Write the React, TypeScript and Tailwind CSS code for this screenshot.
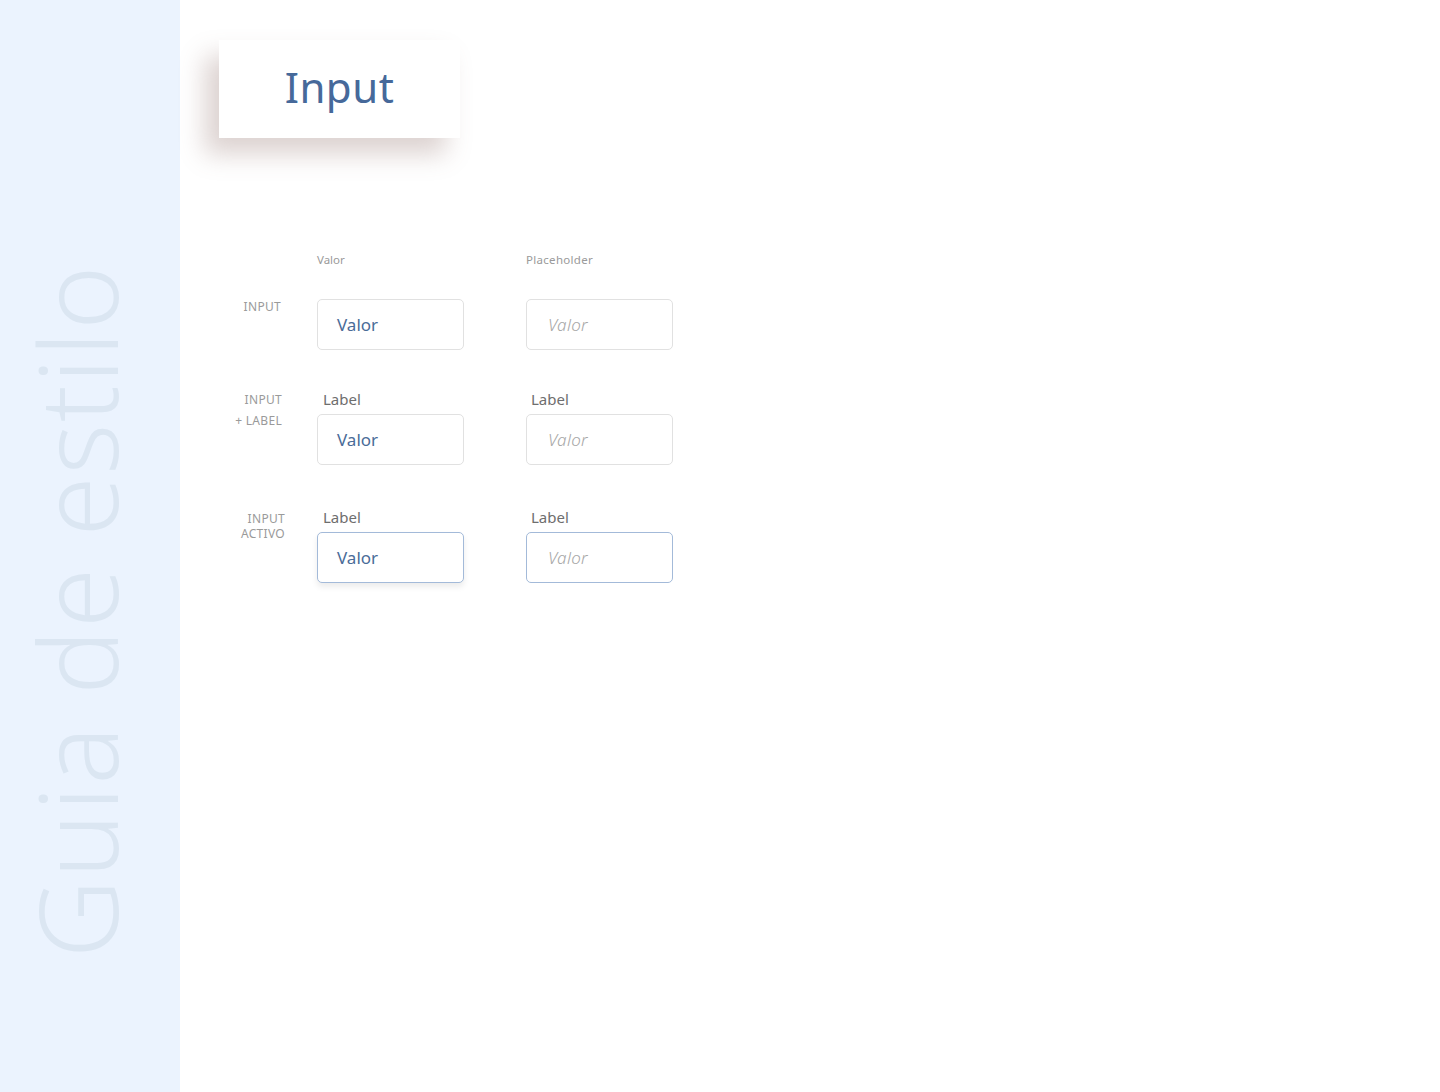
import React from "react";

const font = { fontFamily: '"Noto Sans", "Open Sans", sans-serif' };

function Box({ active, placeholder }: { active?: boolean; placeholder?: boolean }) {
  return (
    <div
      className={
        "w-[147px] h-[51px] rounded-[5px] bg-white flex items-center border " +
        (active ? "border-[#a3bad9] " : "border-[#e1e1e1] ") +
        (active && !placeholder ? "shadow-[0_4px_6px_rgba(0,0,0,0.08)] " : "") +
        (placeholder ? "pl-[21px]" : "pl-[19px]")
      }
    >
      {placeholder ? (
        <span className="text-[17px] italic font-light text-[#a6a6a6] tracking-[0.3px]">Valor</span>
      ) : (
        <span className="text-[17px] text-[#4a6c98]">Valor</span>
      )}
    </div>
  );
}

function Field({ label, active, placeholder, labelOffset }: { label?: boolean; active?: boolean; placeholder?: boolean; labelOffset: string }) {
  return (
    <div className="flex flex-col w-[147px]">
      {label && (
        <div className={"text-[15px] leading-[20px] h-[20px] mb-[5px] text-[#6e6e6e] " + labelOffset}>Label</div>
      )}
      <Box active={active} placeholder={placeholder} />
    </div>
  );
}

export default function App() {
  return (
    <div className="flex w-[1440px] min-h-[1092px] bg-white" style={font}>
      <div className="w-[180px] h-[1092px] shrink-0 bg-[#ebf3fe] flex flex-col justify-end pb-[134px] pl-[31px] overflow-hidden">
        <div className="[writing-mode:vertical-rl] rotate-180 text-[109px] leading-[90px] font-light text-[#dbe6f2] whitespace-nowrap tracking-[1.5px]">
          Guia de estilo
        </div>
      </div>
      <div className="flex flex-col pl-[39px] pt-[40px]">
        <div className="w-[241px] h-[98px] bg-white flex items-center justify-center pb-[5px] shadow-[-14px_16px_24px_rgba(130,95,85,0.28)]">
          <span className="text-[42px] text-[#46699a] tracking-[0.5px]">Input</span>
        </div>

        <div className="flex mt-[114px] text-[11.5px] leading-[16px] h-[16px] text-[#9a9a9a]">
          <div className="w-[98px]" />
          <div className="w-[209px]">Valor</div>
          <div className="tracking-[0.3px]">Placeholder</div>
        </div>

        <div className="flex mt-[31px]">
          <div className="w-[62px] text-right text-[12px] leading-[16px] text-[#9a9a9a] tracking-[0.3px]">INPUT</div>
          <div className="w-[36px]" />
          <div className="flex gap-[62px]">
            <Field labelOffset="pl-[6px]" />
            <Field placeholder labelOffset="pl-[5px]" />
          </div>
        </div>

        <div className="flex mt-[39px]">
          <div className="w-[63px] text-right text-[12px] leading-[21px] text-[#9a9a9a] tracking-[0.3px]">
            <div>INPUT</div>
            <div>+ LABEL</div>
          </div>
          <div className="w-[35px]" />
          <div className="flex gap-[62px]">
            <Field label labelOffset="pl-[6px]" />
            <Field label placeholder labelOffset="pl-[5px]" />
          </div>
        </div>

        <div className="flex mt-[42px]">
          <div className="w-[66px] pt-[4px] text-right text-[12px] leading-[15px] text-[#9a9a9a] tracking-[0.3px]">
            <div>INPUT</div>
            <div>ACTIVO</div>
          </div>
          <div className="w-[32px]" />
          <div className="flex gap-[62px]">
            <Field label active labelOffset="pl-[6px]" />
            <Field label active placeholder labelOffset="pl-[5px]" />
          </div>
        </div>
      </div>
    </div>
  );
}
